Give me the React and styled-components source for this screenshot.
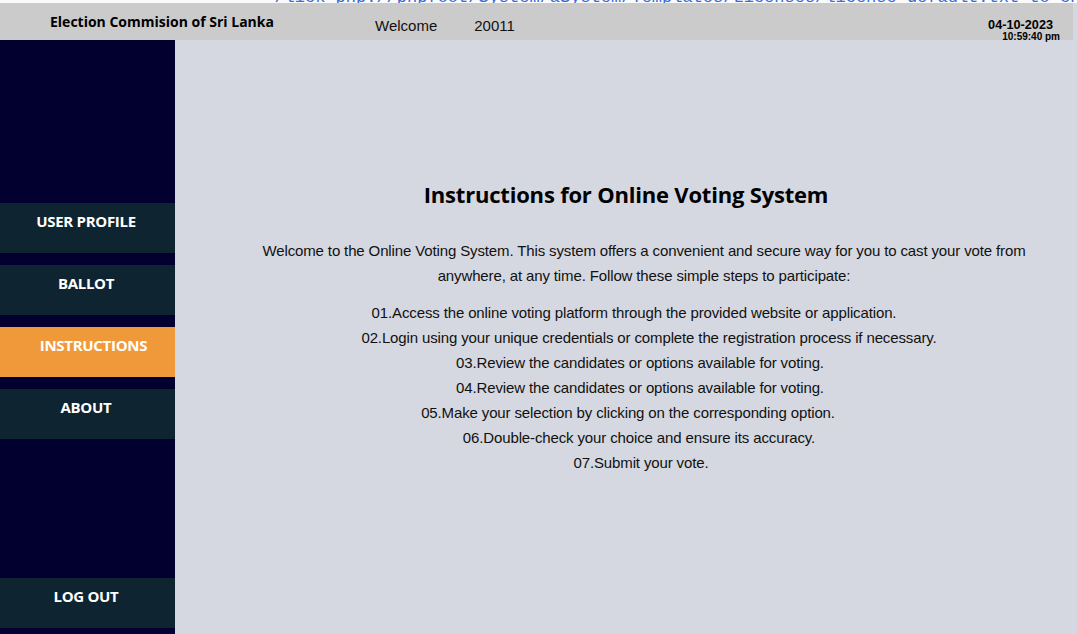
import styled, { createGlobalStyle } from 'styled-components';

const GlobalStyle = createGlobalStyle`
  html, body {
    margin: 0;
    padding: 0;
    height: 100%;
    overflow: hidden;
  }
  body {
    background-color: #d5d8e0;
    font-family: Arial, "Liberation Sans", sans-serif;
  }
  #root {
    height: 100%;
  }
`;

// shift = how far the centre of each line sits off the block centre
const steps = [
  { text: '01.Access the online voting platform through the provided website or application.', shift: -10 },
  { text: '02.Login using your unique credentials or complete the registration process if necessary.', shift: 5 },
  { text: '03.Review the candidates or options available for voting.', shift: -4 },
  { text: '04.Review the candidates or options available for voting.', shift: -4 },
  { text: '05.Make your selection by clicking on the corresponding option.', shift: -16 },
  { text: '06.Double-check your choice and ensure its accuracy.', shift: -5 },
  { text: '07.Submit your vote.', shift: -3 },
];

const menu = [
  { label: 'USER PROFILE' },
  { label: 'BALLOT' },
  { label: 'INSTRUCTIONS', active: true },
  { label: 'ABOUT' },
];

export default function App() {
  return (
    <>
      <GlobalStyle />
      <Page>
        <EditorStrip>
          <EditorText>* /lick php://phpfoot/System/aSystem/Templates/Licenses/license-default.txt to ch</EditorText>
        </EditorStrip>
        <TopBar>
          <Brand>Election Commision of Sri Lanka</Brand>
          <Greeting>
            <span>Welcome</span>
            <span>20011</span>
          </Greeting>
          <Clock>
            <DateText>04-10-2023</DateText>
            <TimeText>10:59:40 pm</TimeText>
          </Clock>
        </TopBar>
        <Body>
          <Sidebar>
            <Menu>
              {menu.map((m) => (
                <NavButton key={m.label} $active={m.active}>{m.label}</NavButton>
              ))}
            </Menu>
            <NavButton>LOG OUT</NavButton>
          </Sidebar>
          <Main>
            <Title>Instructions for Online Voting System</Title>
            <TextBlock>
              <Intro>
                Welcome to the Online Voting System. This system offers a convenient and secure way for you to cast your vote from
                anywhere, at any time. Follow these simple steps to participate:
              </Intro>
              <Steps>
                {steps.map((s) => (
                  <Step key={s.text} $shift={s.shift}>{s.text}</Step>
                ))}
              </Steps>
            </TextBlock>
          </Main>
        </Body>
      </Page>
    </>
  );
}

const Page = styled.div`
  height: 100%;
  display: flex;
  flex-direction: column;
`;

const EditorStrip = styled.div`
  height: 3px;
  flex-shrink: 0;
  overflow: hidden;
  background: #fbfbfb;
  display: flex;
  align-items: flex-end;
`;

const EditorText = styled.div`
  font-family: "Liberation Mono", monospace;
  font-size: 17px;
  line-height: 17px;
  color: #3a6ad6;
  white-space: pre;
  padding-left: 254px;
  margin-bottom: -3px;
`;

const TopBar = styled.div`
  height: 37px;
  flex-shrink: 0;
  background: #cbcbcb;
  display: flex;
  align-items: center;
  padding: 0 13px 0 50px;
  margin-right: 4px;
`;

const Brand = styled.div`
  font-family: "Open Sans", sans-serif;
  font-weight: 700;
  font-size: 14px;
  color: #000;
  width: 325px;
`;

const Greeting = styled.div`
  display: flex;
  gap: 37px;
  font-size: 15px;
  color: #111;
  flex: 1;
  margin-top: 7px;
`;

const Clock = styled.div`
  display: flex;
  flex-direction: column;
  align-items: flex-end;
  font-family: Arial, "Liberation Sans", sans-serif;
  font-weight: 700;
  color: #000;
  margin-top: 18px;
`;

const DateText = styled.div`
  font-size: 12.7px;
  line-height: 12px;
  margin-right: 7px;
`;

const TimeText = styled.div`
  font-size: 10px;
  line-height: 12px;
`;

const Body = styled.div`
  flex: 1;
  display: flex;
  min-height: 0;
`;

const Sidebar = styled.nav`
  width: 175px;
  background: #02002f;
  display: flex;
  flex-direction: column;
  justify-content: space-between;
  padding: 163px 0 6px;
  box-sizing: border-box;
`;

const Menu = styled.div`
  display: flex;
  flex-direction: column;
  gap: 12px;
`;

const NavButton = styled.div`
  height: 50px;
  box-sizing: border-box;
  padding: ${(p) => (p.$active ? '8px 0 0 12px' : '8px 3px 0 0')};
  background: ${(p) => (p.$active ? '#f0993a' : '#0f2431')};
  color: #fff;
  font-family: "Open Sans", sans-serif;
  font-weight: 700;
  font-size: 15px;
  letter-spacing: -0.3px;
  text-align: center;
`;

const Main = styled.main`
  flex: 1;
  display: flex;
  flex-direction: column;
  align-items: center;
  padding-top: 137px;
  color: #111;
`;

const Title = styled.h1`
  margin: 0 0 27px;
  font-family: "Open Sans", sans-serif;
  font-weight: 700;
  font-size: 22px;
  line-height: 34px;
  letter-spacing: -0.2px;
  color: #000;
`;

const TextBlock = styled.div`
  display: flex;
  flex-direction: column;
  align-items: center;
  padding-left: 36px;
  gap: 12px;
`;

const Intro = styled.p`
  margin: 0;
  max-width: 780px;
  text-align: center;
  font-size: 15px;
  line-height: 25px;
  letter-spacing: -0.13px;
`;

const Steps = styled.ul`
  list-style: none;
  margin: 0;
  padding: 0;
  text-align: center;
  font-size: 15px;
  line-height: 25px;
  letter-spacing: -0.13px;
`;

const Step = styled.li`
  padding-left: ${(p) => Math.max(0, p.$shift * 2)}px;
  padding-right: ${(p) => Math.max(0, -p.$shift * 2)}px;
`;
